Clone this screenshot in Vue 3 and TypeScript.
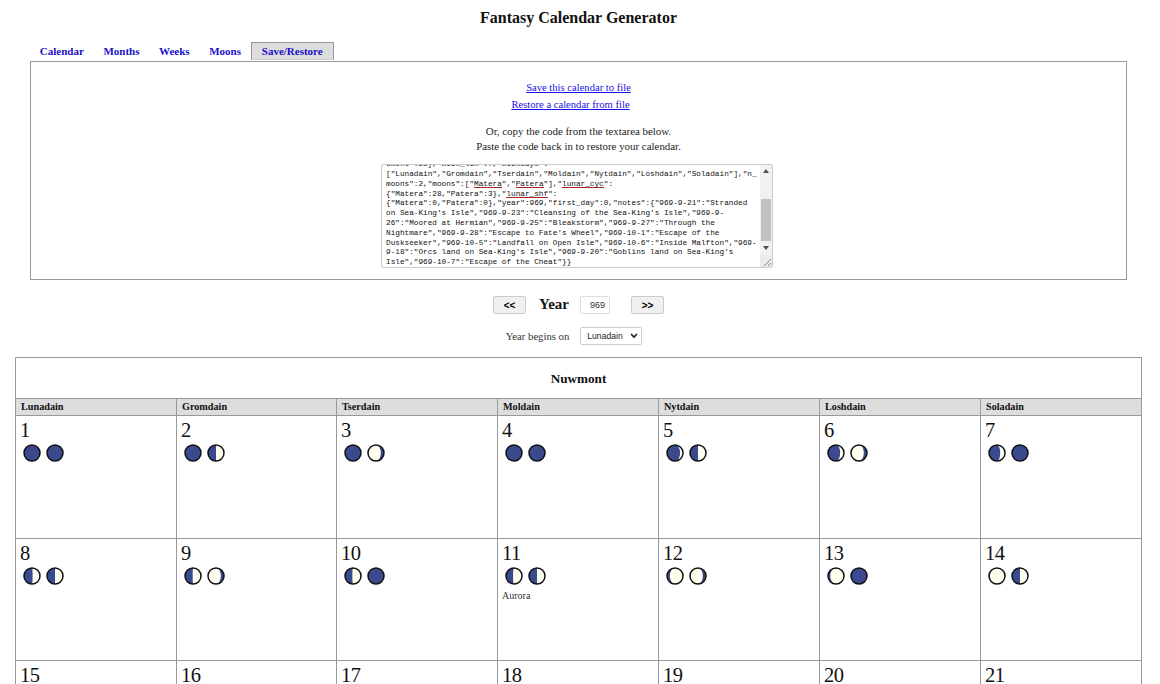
<script setup lang="ts">
const weekdays = ['Lunadain', 'Gromdain', 'Tserdain', 'Moldain', 'Nytdain', 'Loshdain', 'Soladain']
const tabs = ['Calendar', 'Months', 'Weeks', 'Moons', 'Save/Restore']

type Moon = [number, boolean]
interface Day { n: number; moons: Moon[]; note?: string }

const N: Moon = [0, false]
const H: Moon = [0.5, false]
const G: Moon = [0.8, true]

const days: Day[] = [
  { n: 1, moons: [N, N] },
  { n: 2, moons: [N, H] },
  { n: 3, moons: [N, G] },
  { n: 4, moons: [N, N] },
  { n: 5, moons: [[0.18, false], H] },
  { n: 6, moons: [[0.24, false], G] },
  { n: 7, moons: [[0.3, false], N] },
  { n: 8, moons: [[0.46, false], H] },
  { n: 9, moons: [[0.52, false], G] },
  { n: 10, moons: [[0.54, false], N] },
  { n: 11, moons: [[0.56, false], H], note: 'Aurora' },
  { n: 12, moons: [[0.82, false], G] },
  { n: 13, moons: [[0.86, false], N] },
  { n: 14, moons: [[0.95, false], H] },
  ...[15, 16, 17, 18, 19, 20, 21].map((n) => ({ n, moons: [] as Moon[] })),
]

function litPath(k: number, waning: boolean): string {
  const r = 8
  const rx = Math.abs(1 - 2 * k) * r
  const outer = waning ? 0 : 1
  const inner = k < 0.5 ? (waning ? 1 : 0) : (waning ? 0 : 1)
  return `M9 1A8 8 0 0 ${outer} 9 17A${rx.toFixed(2)} 8 0 0 ${inner} 9 1Z`
}

type Seg = { t: string; bad?: boolean }
const lines: Seg[][] = [
  [{ t: 'umont":28},"week_len":7,"weekdays":' }],
  [{ t: '["Lunadain","Gromdain","Tserdain","Moldain","Nytdain","Loshdain","Soladain"],"n_' }],
  [{ t: 'moons":2,"moons":["' }, { t: 'Matera', bad: true }, { t: '","' }, { t: 'Patera', bad: true }, { t: '"],"' }, { t: 'lunar_cyc', bad: true }, { t: '":' }],
  [{ t: '{"Matera":28,"Patera":3},"' }, { t: 'lunar_shf', bad: true }, { t: '":' }],
  [{ t: '{"Matera":0,"Patera":0},"year":969,"first_day":0,"notes":{"969-9-21":"Stranded' }],
  [{ t: 'on Sea-King\'s Isle","969-9-23":"Cleansing of the Sea-King\'s Isle","969-9-' }],
  [{ t: '26":"Moored at Hermian","969-9-25":"Bleakstorm","969-9-27":"Through the' }],
  [{ t: 'Nightmare","969-9-28":"Escape to Fate\'s Wheel","969-10-1":"Escape of the' }],
  [{ t: 'Duskseeker","969-10-5":"Landfall on Open Isle","969-10-6":"Inside Malfton","969-' }],
  [{ t: '9-18":"Orcs land on Sea-King\'s Isle","969-9-20":"Goblins land on Sea-King\'s' }],
  [{ t: 'Isle","969-10-7":"Escape of the Cheat"}}' }],
]
</script>

<template>
  <div class="page">
    <h1 class="title">Fantasy Calendar Generator</h1>
    <nav class="tabs">
      <a v-for="(t, i) in tabs" :key="t" class="tab" :class="{ active: i === 4 }">{{ t }}</a>
    </nav>
    <section class="panel">
      <a class="link first">Save this calendar to file</a>
      <a class="link second">Restore a calendar from file</a>
      <p class="hint">Or, copy the code from the textarea below.<br />Paste the code back in to restore your calendar.</p>
      <div class="code">
        <div class="code-view">
          <div v-for="(l, i) in lines" :key="i" class="code-line"><span v-for="(s, j) in l" :key="j" :class="{ bad: s.bad }">{{ s.t }}</span></div>
        </div>
        <div class="sbar">
          <span class="arrow up"></span>
          <span class="track"><span class="thumb"></span></span>
          <span class="arrow down"></span>
        </div>
        <svg class="grip" width="12" height="12" viewBox="0 0 12 12"><path d="M11 4 4 11M11 8 8 11" stroke="#888" stroke-width="1" fill="none" /></svg>
      </div>
    </section>

    <div class="year-row">
      <button class="btn" type="button">&lt;&lt;</button>
      <span class="year-label">Year</span>
      <span class="year-input">969</span>
      <button class="btn" type="button">&gt;&gt;</button>
    </div>
    <div class="begin-row">
      <span class="begin-label">Year begins on</span>
      <span class="select">Lunadain
        <svg width="8" height="6" viewBox="0 0 8 6"><path d="M1 1l3 3 3-3" stroke="#222" stroke-width="1.7" fill="none" /></svg>
      </span>
    </div>

    <section class="month">
      <div class="month-name">Nuwmont</div>
      <div class="grid">
        <div v-for="w in weekdays" :key="w" class="wd">{{ w }}</div>
        <div v-for="d in days" :key="d.n" class="day">
          <div class="num">{{ d.n }}</div>
          <div class="moons">
            <svg v-for="(m, i) in d.moons" :key="i" width="18" height="18" viewBox="0 0 18 18">
              <circle cx="9" cy="9" r="8" fill="#3b4a8f" />
              <path v-if="m[0] > 0" :d="litPath(m[0], m[1])" fill="#fffff0" />
              <circle cx="9" cy="9" r="8" fill="none" stroke="#111" stroke-width="1.5" />
            </svg>
          </div>
          <div v-if="d.note" class="note">{{ d.note }}</div>
        </div>
      </div>
    </section>
  </div>
</template>

<style>
html, body { margin: 0; overflow: hidden; background: #fff; }
</style>

<style scoped>
.page {
  height: 684px;
  overflow: hidden;
  font-family: "Liberation Serif", serif;
  color: #111;
  box-sizing: border-box;
  padding: 0 18px 0 15px;
}
.title {
  margin: 0;
  padding-top: 9px;
  height: 42px;
  box-sizing: border-box;
  font-size: 16px;
  line-height: 17px;
  font-weight: 700;
  text-align: center;
}
.tabs {
  display: flex;
  height: 18px;
  margin: 0 0 1px 15px;
  align-items: stretch;
}
.tab {
  padding: 1px 8.8px 0;
  font-size: 11px;
  line-height: 14px;
  font-weight: 700;
  color: #1a10c8;
  box-sizing: border-box;
  border: 1px solid transparent;
  border-bottom: 0;
}
.tab.active {
  background: #ddd;
  border-color: #999;
  border-bottom: 1px solid #ccc;
  padding: 1px 10px 0;
}
.panel {
  margin: 0 0 0 15px;
  width: 1097px;
  height: 219px;
  box-sizing: border-box;
  border: 1px solid #999;
  display: flex;
  flex-direction: column;
  align-items: center;
  font-size: 10.9px;
}
.link {
  color: #1a10e8;
  text-decoration: underline;
  line-height: 17px;
  font-size: 10.6px;
}
.link.first { margin-top: 17px; }
.link.second { margin-right: 16px; }
.hint {
  margin: 11px 0 0;
  text-align: center;
  line-height: 15px;
  color: #222;
}
.code {
  position: relative;
  display: flex;
  margin: 10px 3px 0 0;
  width: 392px;
  height: 104px;
  box-sizing: border-box;
  border: 1px solid #ccc;
  border-radius: 2px;
}
.code-view {
  flex: 1;
  overflow: hidden;
  display: flex;
  flex-direction: column;
  justify-content: flex-end;
  padding: 0 0 0 4px;
  font-family: "Liberation Mono", monospace;
  font-size: 7.72px;
  line-height: 9.8px;
  color: #111;
}
.code-line { white-space: pre; flex: none; position: relative; top: 1px; }
.bad {
  background: repeating-linear-gradient(90deg, #e02020 0 2px, #333 2px 3px) left bottom / 100% 1px no-repeat;
}
.sbar {
  width: 12px;
  background: #f1f1f1;
  display: flex;
  flex-direction: column;
  align-items: center;
}
.track { flex: 1; width: 100%; padding: 26px 1px 5px; box-sizing: border-box; display: flex; }
.thumb { flex: 1; background: #c1c1c1; }
.arrow { width: 0; height: 0; border-left: 3px solid transparent; border-right: 3px solid transparent; }
.arrow.up { border-bottom: 4px solid #505050; margin-top: 4px; }
.arrow.down { border-top: 4px solid #505050; margin-bottom: 17px; }
.grip { position: absolute; right: 0; bottom: 0; background: #ebebeb; }
.year-row {
  display: flex;
  align-items: center;
  justify-content: center;
  height: 24px;
  margin: 13px 0 0;
}
.btn {
  width: 33px;
  height: 18px;
  padding: 0;
  border: 1px solid #ccc;
  border-radius: 2px;
  background: #f0f0f0;
  font-family: "Liberation Sans", sans-serif;
  font-size: 10px;
  font-weight: 700;
  color: #000;
}
.year-label { margin-left: 13px; font-size: 15px; line-height: 20px; margin-top: -3px; font-weight: 700; }
.year-input {
  margin: 0 21px 0 11px;
  width: 30px;
  height: 18px;
  box-sizing: border-box;
  border: 1px solid #ddd;
  border-radius: 2px;
  font-family: "Liberation Sans", sans-serif;
  font-size: 9px;
  line-height: 16px;
  text-align: right;
  padding-right: 4px;
  color: #333;
}
.begin-row {
  display: flex;
  align-items: center;
  justify-content: center;
  margin: 9px 9px 0 0;
  height: 20px;
}
.begin-label { font-size: 10.7px; color: #333; margin-right: 11px; }
.select {
  width: 62px;
  height: 18px;
  box-sizing: border-box;
  border: 1px solid #ccc;
  border-radius: 2px;
  font-family: "Liberation Sans", sans-serif;
  font-size: 8.6px;
  padding-left: 6px;
  display: flex;
  align-items: center;
  justify-content: space-between;
  padding-right: 3px;
  color: #222;
}
.month {
  margin-top: 11px;
  width: 1127px;
  box-sizing: border-box;
  border: 1px solid #999;
}
.month-name {
  height: 40px;
  line-height: 41px;
  text-align: center;
  font-size: 13.2px;
  font-weight: 700;
}
.grid {
  display: grid;
  grid-template-columns: 160px 160px repeat(5, 161px);
  grid-template-rows: 18px 123px 122px 122px;
}
.wd {
  box-sizing: border-box;
  background: #ddd;
  border-top: 1px solid #999;
  border-left: 1px solid #999;
  border-bottom: 1px solid #999;
  font-size: 10.2px;
  font-weight: 700;
  line-height: 16px;
  padding-left: 5px;
}
.wd:first-child, .day:nth-child(7n + 1) { border-left: 0; }
.day {
  box-sizing: border-box;
  border-left: 1px solid #999;
  border-bottom: 1px solid #999;
  padding-left: 4px;
}
.num {
  font-size: 20.5px;
  letter-spacing: -0.5px;
  line-height: 20px;
  margin-top: 4px;
}
.moons { display: flex; gap: 5px; margin: 4px 0 0 3px; height: 18px; }
.note { font-size: 10px; margin-top: 5px; color: #333; line-height: 12px; }
</style>
